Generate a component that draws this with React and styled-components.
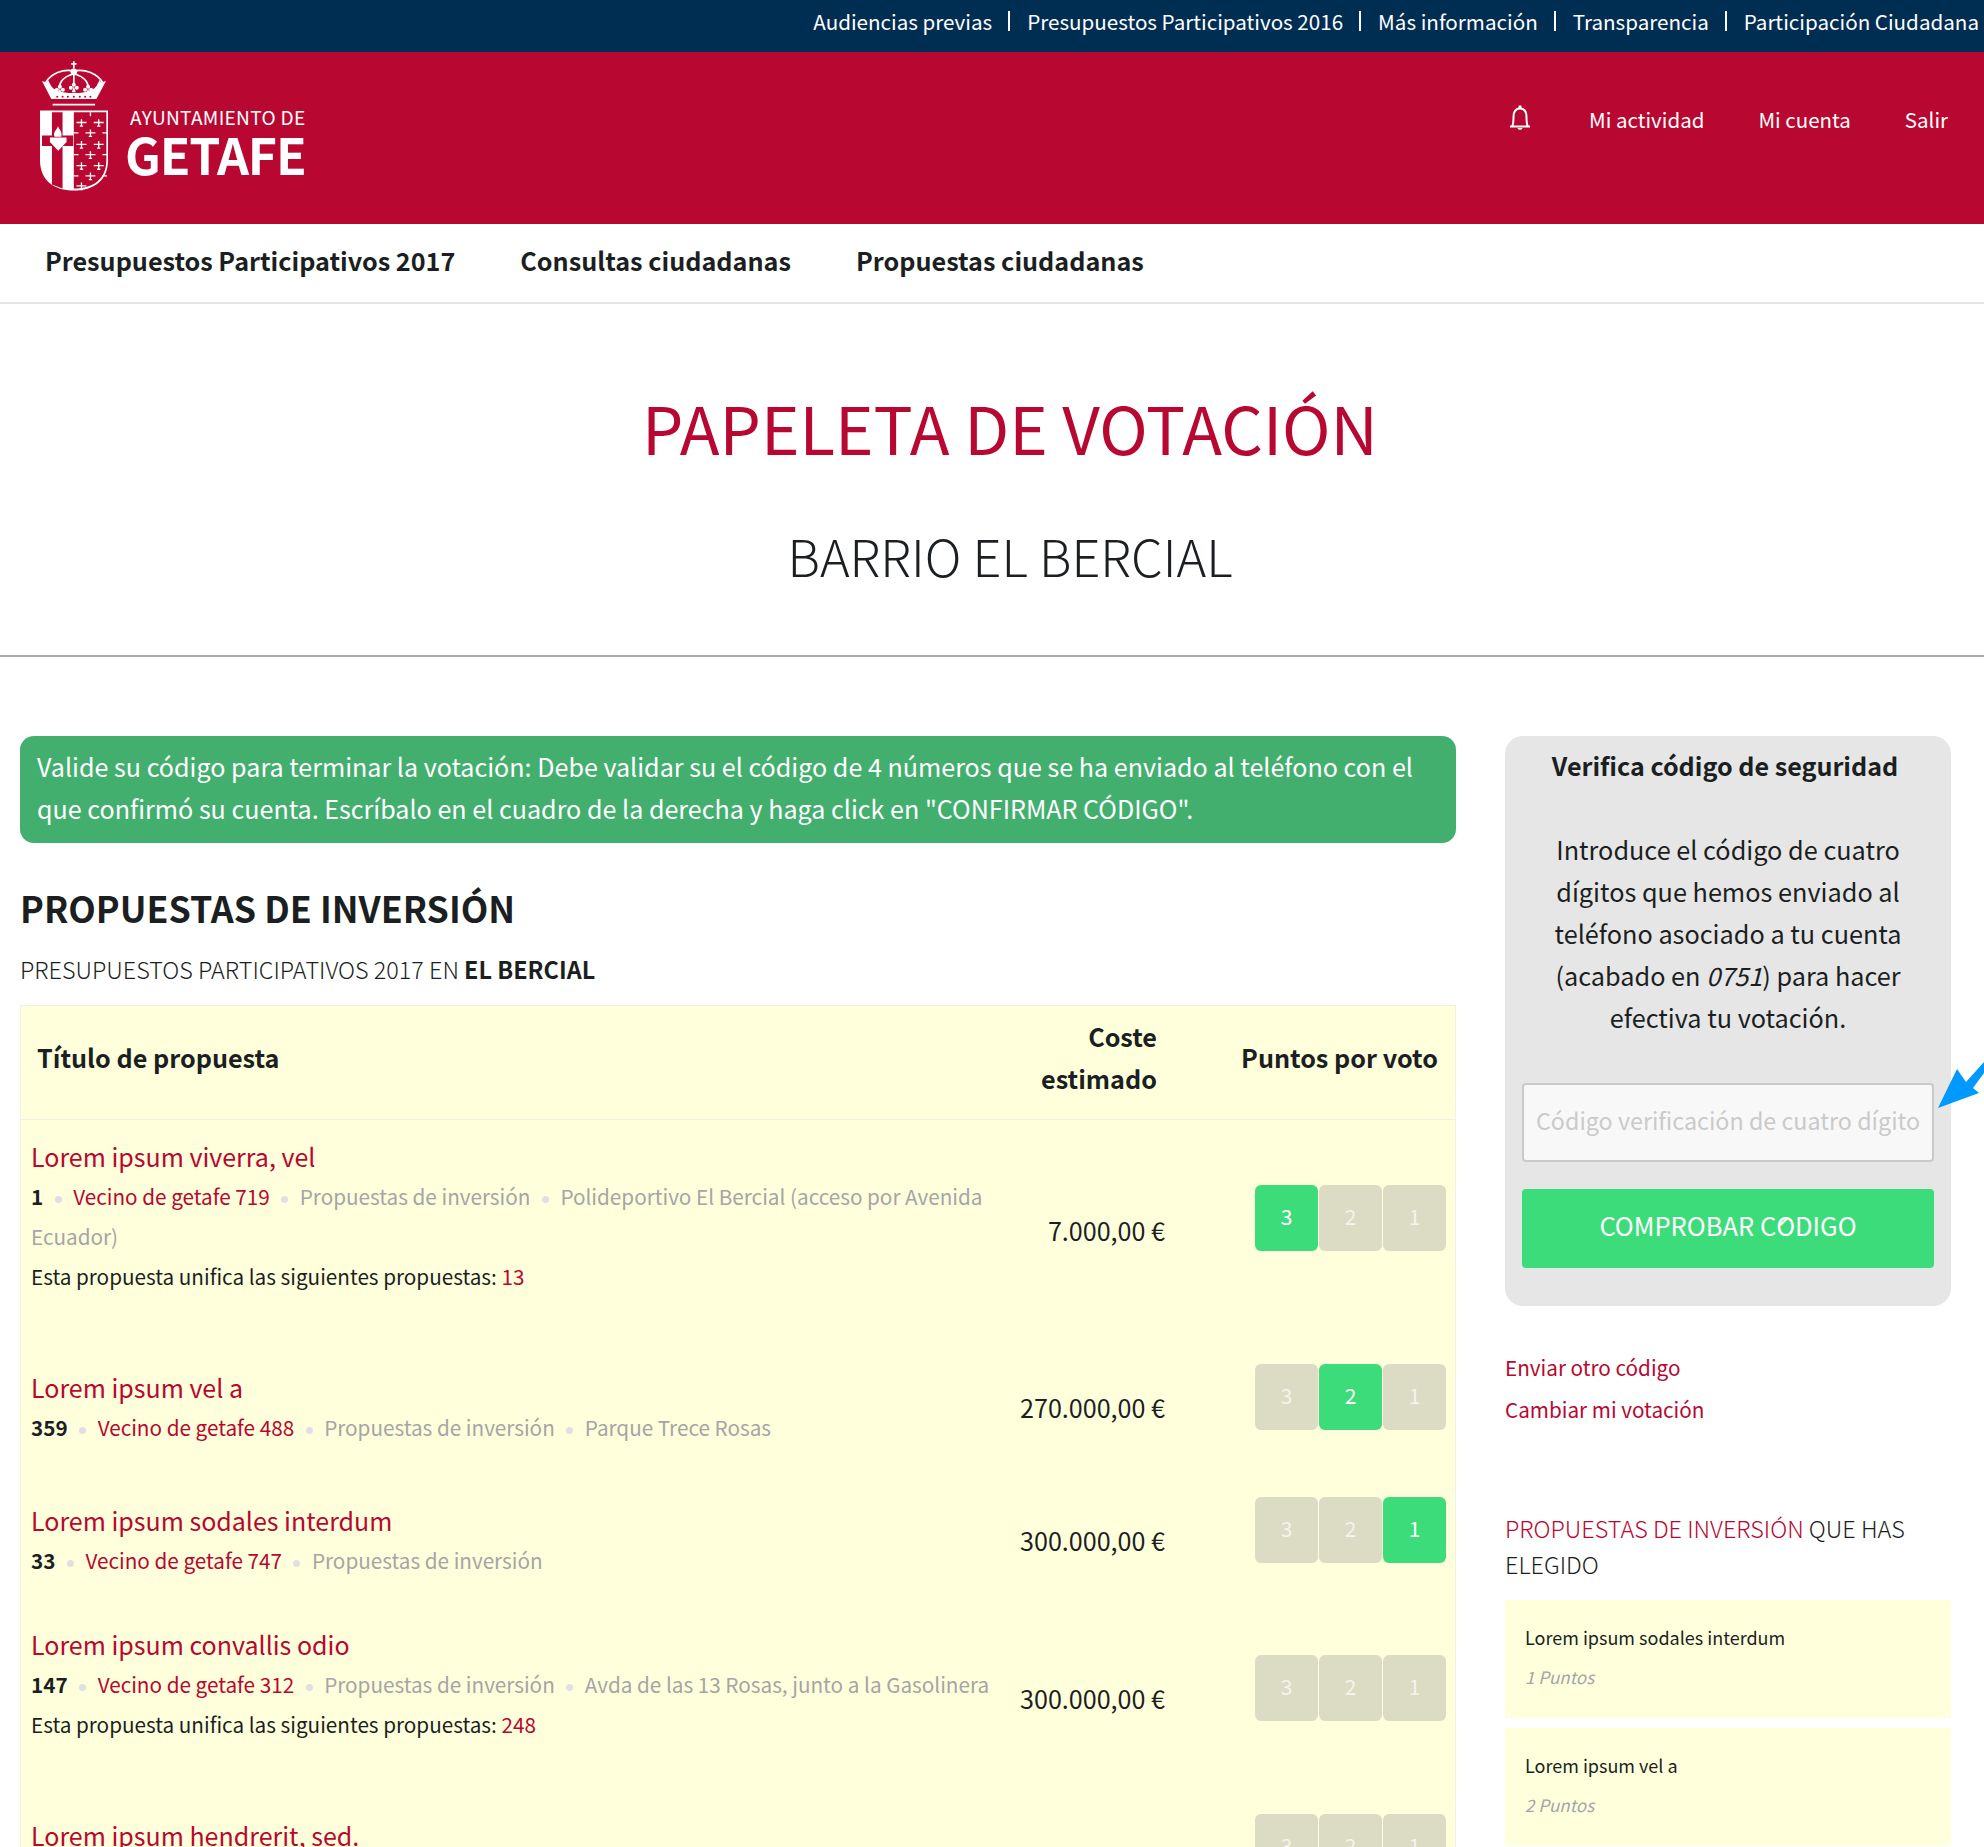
import styled, { createGlobalStyle } from "styled-components"

const GlobalStyle = createGlobalStyle`
html, body {
    margin: 0;
    padding: 0;
    background: #fff;
}
body {
    font-family: "Noto Sans CJK SC", "Open Sans", sans-serif;
    font-size: 24px;
    color: #1b1f22;
}
#root {
    height: 1847px;
    overflow: hidden;
    position: relative;
}
* { box-sizing: border-box; }
`

const proposals = [
    {
        title: "Lorem ipsum viverra, vel", votes: 1, author: "Vecino de getafe 719", place: "Polideportivo El Bercial (acceso por Avenida Ecuador)",
        merged: "13", cost: "7.000,00 €", selected: 3, height: 231, costTop: 90, voteTop: 65,
    },
    {
        title: "Lorem ipsum vel a", votes: 359, author: "Vecino de getafe 488", place: "Parque Trece Rosas",
        cost: "270.000,00 €", selected: 2, height: 133, costTop: 36, voteTop: 13,
    },
    {
        title: "Lorem ipsum sodales interdum", votes: 33, author: "Vecino de getafe 747",
        cost: "300.000,00 €", selected: 1, height: 124, costTop: 36, voteTop: 13,
    },
    {
        title: "Lorem ipsum convallis odio", votes: 147, author: "Vecino de getafe 312", place: "Avda de las 13 Rosas, junto a la Gasolinera",
        merged: "248", cost: "300.000,00 €", selected: 0, height: 191, costTop: 70, voteTop: 47,
    },
    {
        title: "Lorem ipsum hendrerit, sed.", votes: 12, author: "Vecino de getafe 105",
        cost: "300.000,00 €", selected: 0, height: 133, costTop: 70, voteTop: 15,
    },
]

const topLinks = ["Audiencias previas", "Presupuestos Participativos 2016", "Más información", "Transparencia", "Participación Ciudadana"]
const planes = [[185, 217], [237, 217], [212, 248], [185, 283], [237, 283], [212, 314], [185, 347], [237, 347], [212, 378], [185, 408]]
const edgeMarks = [248, 314, 378]
const fleurons = [[120, 118], [162, 112], [205, 118]]
const bandDots = [112, 128, 144, 162, 180, 196, 212]

function Plane({ x, y }) {
    return <path d={`M${x - 15} ${y}H${x + 15}M${x} ${y - 10}V${y + 12}M${x - 5} ${y + 11}H${x + 5}`} />
}

function LogoMark() {
    return (
        <LogoSvg viewBox="60 30 205 392">
            <g fill="none" stroke="#fff" strokeWidth="5">
                <path d="M162 32V54M154 40H170" />
                <path d="M76 98C92 70 130 54 162 62C195 54 234 70 250 98" />
                <path d="M118 112C120 86 140 76 162 70C184 76 204 86 206 112" />
                <path d="M162 70V104" />
                <path d="M98 163H226" />
            </g>
            <g fill="#fff">
                <circle cx="162" cy="64" r="10" />
                <path d="M66 92L80 96L84 88L90 100C98 120 120 128 162 128C204 128 226 120 234 100L240 88L244 96L259 92L230 146H94Z" />
                {fleurons.map(([x, y]) => (
                    <g key={x}>
                        <circle cx={x} cy={y - 9} r="6" />
                        <circle cx={x - 9} cy={y} r="6" />
                        <circle cx={x + 9} cy={y} r="6" />
                        <path d={`M${x - 6} ${y + 14}H${x + 6}L${x} ${y - 4}Z`} />
                    </g>
                ))}
            </g>
            <g fill="#b80731">
                {bandDots.map((x) => <circle key={x} cx={x} cy="139" r="3" />)}
            </g>
            <path d="M60 181H265V330C265 392 222 422 162 422C102 422 60 392 60 330Z" fill="#fff" />
            <path d="M162 186H260V330C260 388 220 416 162 416Z" fill="#b80731" />
            <path d="M96 186H128V256H160V288H128V416L96 404V288H66V256H96Z" fill="#b80731" />
            <path d="M90 262H140V276L115 302L90 276Z" fill="#fff" />
            <path d="M104 260C98 246 110 240 114 228C120 240 128 246 124 260Z" fill="#fff" />
            <g fill="none" stroke="#fff" strokeWidth="4">
                {planes.map(([x, y]) => <Plane key={`${x}-${y}`} x={x} y={y} />)}
                {edgeMarks.map((y) => <path key={y} d={`M162 ${y}H176M248 ${y}H262`} />)}
                <path d="M212 186V198" />
            </g>
        </LogoSvg>
    )
}

function BellIcon() {
    return (
        <BellSvg viewBox="0 0 22 26">
            <path d="M1 21.5H21M3 21.5C4.5 19.5 4.5 17 4.5 12C4.5 6.5 7 3.5 11 3.5C15 3.5 17.5 6.5 17.5 12C17.5 17 17.5 19.5 19 21.5" fill="none" stroke="#fff" strokeWidth="2" />
            <circle cx="11" cy="2" r="1.7" fill="#fff" />
            <path d="M8.5 23H13.5C13.2 25.4 8.8 25.4 8.5 23Z" fill="#fff" />
        </BellSvg>
    )
}

function App() {
    return (
        <>
            <GlobalStyle />
            <TopBar>
                {topLinks.map((link, i) => (
                    <TopLink key={link} $first={i === 0}>{link}</TopLink>
                ))}
            </TopBar>
            <Brand>
                <Logo>
                    <LogoMark />
                    <LogoText>
                        <City>AYUNTAMIENTO DE</City>
                        <Getafe>GETAFE</Getafe>
                    </LogoText>
                </Logo>
                <UserMenu>
                    <BellIcon />
                    <UserLink>Mi actividad</UserLink>
                    <UserLink>Mi cuenta</UserLink>
                    <UserLink>Salir</UserLink>
                </UserMenu>
            </Brand>
            <MainNav>
                <NavLink>Presupuestos Participativos 2017</NavLink>
                <NavLink>Consultas ciudadanas</NavLink>
                <NavLink>Propuestas ciudadanas</NavLink>
            </MainNav>
            <Hero>
                <Title>PAPELETA DE VOTACIÓN</Title>
                <Subtitle>BARRIO EL BERCIAL</Subtitle>
            </Hero>
            <Content>
                <Ballot>
                    <Alert>
                        Valide su código para terminar la votación: Debe validar su el código de 4 números que se ha enviado al teléfono con el que confirmó su cuenta. Escríbalo en el cuadro de la derecha y haga click en "CONFIRMAR CÓDIGO".
                    </Alert>
                    <SectionTitle>PROPUESTAS DE INVERSIÓN</SectionTitle>
                    <SectionSub>PRESUPUESTOS PARTICIPATIVOS 2017 EN <strong>EL BERCIAL</strong></SectionSub>
                    <Table>
                        <HeadRow>
                            <HeadCell>Título de propuesta</HeadCell>
                            <HeadCost>Coste estimado</HeadCost>
                            <HeadVotes>Puntos por voto</HeadVotes>
                        </HeadRow>
                        {proposals.map((p) => (
                            <Row key={p.title} $height={p.height}>
                                <div>
                                    <ProposalTitle>{p.title}</ProposalTitle>
                                    <Meta>
                                        <strong>{p.votes}</strong>
                                        <Dot />
                                        <RedText>{p.author}</RedText>
                                        <Dot />
                                        Propuestas de inversión
                                        {p.place && <><Dot />{p.place}</>}
                                    </Meta>
                                    {p.merged && <Merged>Esta propuesta unifica las siguientes propuestas: <RedText>{p.merged}</RedText></Merged>}
                                </div>
                                <Cost $top={p.costTop}>{p.cost}</Cost>
                                <VoteGroup $top={p.voteTop}>
                                    {[3, 2, 1].map((n) => (
                                        <VoteButton key={n} $active={p.selected === n}>{n}</VoteButton>
                                    ))}
                                </VoteGroup>
                            </Row>
                        ))}
                    </Table>
                </Ballot>
                <Sidebar>
                    <VerifyBox>
                        <VerifyTitle>Verifica código de seguridad</VerifyTitle>
                        <VerifyText>
                            Introduce el código de cuatro dígitos que hemos enviado al teléfono asociado a tu cuenta (acabado en <em>0751</em>) para hacer efectiva tu votación.
                        </VerifyText>
                        <CodeInput placeholder="Código verificación de cuatro dígitos" />
                        <CheckButton>COMPROBAR ĆODIGO</CheckButton>
                    </VerifyBox>
                    <SideLink>Enviar otro código</SideLink>
                    <SideLink>Cambiar mi votación</SideLink>
                    <ChosenTitle><RedText>PROPUESTAS DE INVERSIÓN</RedText> QUE HAS ELEGIDO</ChosenTitle>
                    <ChosenList>
                        <ChosenCard>
                            <ChosenName>Lorem ipsum sodales interdum</ChosenName>
                            <ChosenPoints>1 Puntos</ChosenPoints>
                        </ChosenCard>
                        <ChosenCard>
                            <ChosenName>Lorem ipsum vel a</ChosenName>
                            <ChosenPoints>2 Puntos</ChosenPoints>
                        </ChosenCard>
                    </ChosenList>
                </Sidebar>
            </Content>
            <Arrow viewBox="0 0 46 46">
                <path d="M0 46L19 7L28 20L46 0V11L35 26L41 31Z" fill="#0099ff" />
            </Arrow>
        </>
    )
}

const TopBar = styled.div`
height: 52px;
background: #002d52;
display: flex;
justify-content: flex-end;
align-items: center;
padding: 0 5px 10px 0;
color: #fff;
font-size: 20.6px;
`
const TopLink = styled.a`
padding-left: ${(p) => (p.$first ? 0 : "17px")};
margin-left: ${(p) => (p.$first ? 0 : "16px")};
line-height: 20px;
border-left: ${(p) => (p.$first ? "none" : "2px solid #fff")};
`
const Brand = styled.header`
height: 172px;
background: #b80731;
display: flex;
justify-content: space-between;
padding: 8px 36px 0 40px;
color: #fff;
`
const Logo = styled.div`
display: flex;
`
const LogoSvg = styled.svg`
width: 68px;
height: 131px;
display: block;
`
const LogoText = styled.div`
margin: 42px 0 0 17px;
display: flex;
flex-direction: column;
align-items: flex-end;
`
const City = styled.div`
font-size: 19.1px;
line-height: 30px;
letter-spacing: 0.3px;
`
const Getafe = styled.div`
font-size: 50px;
font-weight: 700;
line-height: 42px;
letter-spacing: -1.2px;
`
const UserMenu = styled.nav`
display: flex;
align-items: center;
height: 118px;
gap: 54px;
`
const BellSvg = styled.svg`
width: 22px;
height: 26px;
margin: -3px 4px 0 0;
`
const UserLink = styled.a`
font-size: 20.5px;
`
const MainNav = styled.nav`
height: 80px;
border-bottom: 2px solid #e6e6e6;
display: flex;
align-items: center;
padding: 0 0 6px 45px;
gap: 65px;
`
const NavLink = styled.a`
font-size: 25.2px;
font-weight: 700;
`
const Hero = styled.section`
height: 353px;
border-bottom: 2px solid #a8a8a8;
padding: 78px 0 0 36px;
text-align: center;
`
const Title = styled.h1`
margin: 0;
color: #b80731;
font-size: 65.4px;
font-weight: 400;
line-height: 90px;
`
const Subtitle = styled.h2`
margin: 51px 0 0;
font-size: 50.5px;
font-weight: 300;
line-height: 64px;
`
const Content = styled.div`
display: flex;
align-items: flex-start;
padding: 79px 33px 0 20px;
gap: 49px;
`
const Ballot = styled.main`
width: 1436px;
flex-shrink: 0;
`
const Alert = styled.div`
height: 107px;
background: #43af6f;
color: #fff;
border-radius: 14px;
padding: 9px 17px;
font-size: 25.1px;
line-height: 42px;
`
const SectionTitle = styled.h3`
margin: 39px 0 0;
font-size: 35.8px;
font-weight: 700;
line-height: 50px;
`
const SectionSub = styled.div`
margin-top: 19px;
font-size: 23.4px;
line-height: 36px;
font-weight: 300;
strong { font-weight: 700; }
`
const Table = styled.div`
margin-top: 18px;
background: #ffffdc;
border: 1px solid #f1f1e4;
`
const HeadRow = styled.div`
height: 114px;
display: grid;
grid-template-columns: 1fr 172px 298px;
align-items: center;
border-bottom: 1px solid #f1f1e4;
padding-bottom: 12px;
font-weight: 700;
font-size: 25.2px;
`
const HeadCell = styled.div`
padding-left: 16px;
`
const HeadCost = styled.div`
text-align: right;
line-height: 42px;
padding-left: 40px;
`
const HeadVotes = styled.div`
text-align: right;
padding-right: 17px;
`
const Row = styled.div`
height: ${(p) => p.$height}px;
display: grid;
grid-template-columns: 980px 154px 1fr;
padding: 16px 0 0 10px;
`
const ProposalTitle = styled.div`
color: #b80731;
font-size: 25px;
line-height: 40px;
`
const Meta = styled.div`
color: #a5a5a5;
font-size: 20.7px;
line-height: 40px;
strong { color: #1b1f22; font-weight: 700; }
`
const Dot = styled.span`
display: inline-block;
width: 7px;
height: 7px;
border-radius: 50%;
background: #dfdfe6;
margin: 0 11.5px;
vertical-align: middle;
`
const RedText = styled.span`
color: #b80731;
`
const Merged = styled.div`
font-size: 20.7px;
line-height: 40px;
`
const Cost = styled.div`
margin-top: ${(p) => p.$top - 16}px;
font-size: 25.1px;
line-height: 40px;
text-align: right;
`
const VoteGroup = styled.div`
margin-top: ${(p) => p.$top - 16}px;
display: flex;
gap: 1px;
padding-left: 90px;
`
const VoteButton = styled.div`
width: 63px;
height: 66px;
border-radius: 6px;
background: ${(p) => (p.$active ? "#3ddc7b" : "#dcdcc4")};
color: ${(p) => (p.$active ? "#fff" : "rgba(255, 255, 255, 0.7)")};
display: flex;
align-items: center;
justify-content: center;
padding-bottom: 4px;
font-size: 21px;
`
const Sidebar = styled.aside`
width: 446px;
flex-shrink: 0;
`
const VerifyBox = styled.div`
height: 570px;
background: #e6e6e6;
border-radius: 18px;
padding: 9px 17px 0;
text-align: center;
`
const VerifyTitle = styled.div`
font-size: 25.1px;
font-weight: 700;
line-height: 40px;
margin-left: -6px;
`
const VerifyText = styled.p`
margin: 43px 0 0;
font-size: 25.25px;
line-height: 42px;
`
const CodeInput = styled.input`
display: block;
width: 412px;
height: 79px;
margin-top: 45px;
border: 2px solid #cacaca;
border-radius: 4px;
background: #f8f8f8;
padding: 0 12px 5px;
font: inherit;
font-size: 23.3px;
&::placeholder { color: #cacaca; }
`
const CheckButton = styled.button`
display: block;
width: 412px;
height: 79px;
margin-top: 27px;
border: none;
border-radius: 4px;
background: #3ddc7b;
color: #fff;
padding: 0 0 8px;
font: inherit;
font-size: 25.5px;
`
const SideLink = styled.a`
display: block;
color: #b80731;
font-size: 20.7px;
line-height: 42px;
&:first-of-type { margin-top: 40px; }
`
const ChosenTitle = styled.h4`
margin: 80px 0 0;
font-size: 23.4px;
font-weight: 300;
line-height: 36px;
`
const ChosenList = styled.div`
display: flex;
flex-direction: column;
gap: 10px;
margin-top: 18px;
`
const ChosenCard = styled.div`
height: 118px;
background: #ffffdc;
padding: 17px 20px;
`
const ChosenName = styled.div`
font-size: 18px;
line-height: 40px;
`
const ChosenPoints = styled.div`
font-size: 17px;
font-style: italic;
line-height: 40px;
color: #a5a5a5;
`
const Arrow = styled.svg`
position: absolute;
left: 1938px;
top: 1062px;
width: 46px;
height: 46px;
`

export default App
